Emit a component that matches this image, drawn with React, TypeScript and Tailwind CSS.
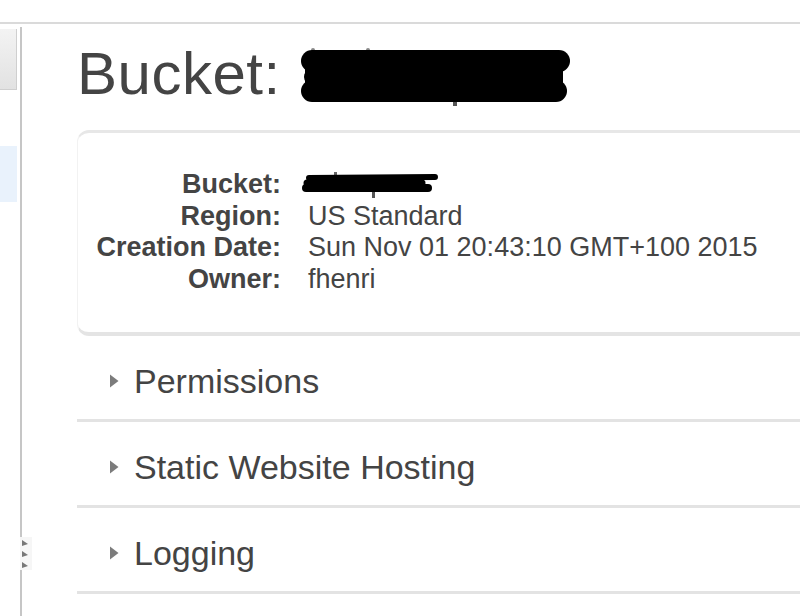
import React from "react";

const sections = ["Permissions", "Static Website Hosting", "Logging"];

const details = [
  { label: "Bucket:", value: null },
  { label: "Region:", value: "US Standard" },
  { label: "Creation Date:", value: "Sun Nov 01 20:43:10 GMT+100 2015" },
  { label: "Owner:", value: "fhenri" },
];

function TitleRedaction() {
  // origin of this drawing is (290, 45) on the page
  return (
    <svg width="285" height="65" viewBox="0 0 285 65" className="ml-[12px] shrink-0">
      <rect x="160" y="52" width="4" height="9" fill="#555" />
      <rect x="18" y="3" width="4" height="4" rx="2" fill="#888" />
      <rect x="73" y="3" width="4" height="4" rx="2" fill="#888" />
      <rect x="12" y="12" width="258" height="42" fill="#000" />
      <line x1="19" y1="16" x2="266" y2="16" stroke="#000" strokeWidth="22" strokeLinecap="round" />
      <line x1="20" y1="32" x2="261" y2="32" stroke="#000" strokeWidth="18" strokeLinecap="round" />
      <line x1="19" y1="46" x2="263" y2="46" stroke="#000" strokeWidth="22" strokeLinecap="round" />
    </svg>
  );
}

function ValueRedaction() {
  // origin at (300, 169)
  return (
    <svg width="145" height="31" viewBox="0 0 145 31" className="-ml-[8px] block">
      <rect x="34" y="3" width="3" height="4" fill="#666" />
      <rect x="72" y="21" width="3" height="8" fill="#555" />
      <line x1="9" y1="9" x2="135" y2="8" stroke="#000" strokeWidth="6" strokeLinecap="round" />
      <line x1="7" y1="14" x2="122" y2="14" stroke="#000" strokeWidth="7" strokeLinecap="round" />
      <line x1="6" y1="19" x2="128" y2="19" stroke="#000" strokeWidth="8" strokeLinecap="round" />
    </svg>
  );
}

function Caret() {
  return (
    <svg width="10" height="14" viewBox="0 0 10 14" className="shrink-0">
      <path d="M1 0.5 L9.5 7 L1 13.5 Z" fill="#7c7c7c" />
    </svg>
  );
}

export default function App() {
  return (
    <div className="relative h-[616px] w-[800px] overflow-hidden bg-white font-['Liberation_Sans',Arial,sans-serif] text-[#444]">
      <div className="h-[24px] border-b-2 border-[#dadada]" />

      <div className="flex h-[592px]">
        {/* left panel */}
        <div className="mt-[3px] w-[22px] shrink-0 border-r-2 border-[#c6c6c6]">
          <div className="mt-[2px] h-[61px] w-[17px] border-b border-r border-[#cfcfcf] bg-gradient-to-b from-[#f3f3f3] to-[#e2e2e2]" />
          <div className="mt-[56px] h-[56px] w-[17px] bg-[#e9f2fc]" />
        </div>

        {/* main */}
        <div className="min-w-0 flex-1 pl-[55px]">
          <div className="mt-[21px] flex h-[65px] items-start">
            <h1 className="text-[60px] leading-[58px] font-normal tracking-[0.5px]">Bucket:</h1>
            <TitleRedaction />
          </div>

          <div className="mt-[20px] h-[206px] w-[760px] rounded-[12px] border-t-[3px] border-b-[4px] border-l border-t-[#e7e7e7] border-b-[#e4e4e4] border-l-[#f2f2f2] pt-[36px]">
            <div className="grid grid-cols-[203px_1fr] gap-x-[27px] text-[27px] leading-[31.5px]">
              {details.map((d) => (
                <React.Fragment key={d.label}>
                  <div className="text-right font-bold">{d.label}</div>
                  <div className="h-[31.5px]">{d.value ?? <ValueRedaction />}</div>
                </React.Fragment>
              ))}
            </div>
          </div>

          <div className="w-[760px]">
            {sections.map((s) => (
              <div
                key={s}
                className="flex h-[86px] items-center gap-[15px] border-b-[3px] border-[#e3e3e3] pl-[32px] pt-[6px]"
              >
                <Caret />
                <span className="text-[34px] leading-[34px]">{s}</span>
              </div>
            ))}
          </div>
        </div>
      </div>

      {/* splitter grip */}
      <div className="absolute left-[20px] top-[537px] flex h-[33px] w-[12px] flex-col items-start justify-around bg-[#f6f6f6] pl-[2px]">
        {[0, 1, 2].map((i) => (
          <svg key={i} width="6" height="6" viewBox="0 0 6 6">
            <path d="M0 0 L6 4 L0 6 Z" fill="#777" />
          </svg>
        ))}
      </div>
    </div>
  );
}
